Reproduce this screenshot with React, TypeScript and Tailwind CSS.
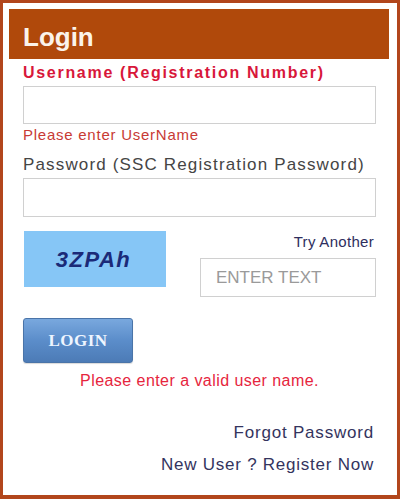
export default function App() {
  return (
    <div
      className="w-[400px] h-[499px] border-[3px] border-b-4 border-[#b2461c] bg-white pt-[6px] pl-[6px] pr-[8px] box-border"
      style={{ fontFamily: '"Liberation Sans", Arial, sans-serif' }}
    >
      <div className="w-[380px] h-[50px] bg-[#b0490b] pl-[14px] pt-[13px]">
        <div className="text-[26px] leading-[30px] font-bold text-[#fbf3ea]">Login</div>
      </div>
      <div className="pl-[14px] pr-[13px] flex flex-col">
        <div className="mt-[4px] text-[16px] leading-[20px] font-bold text-[#d8173a] tracking-[1.7px] whitespace-nowrap">
          Username (Registration Number)
        </div>
        <div className="mt-[3px] h-[38px] border border-[#d0d0d0] bg-white"></div>
        <div className="mt-[2px] text-[15px] leading-[18px] text-[#c83a35] tracking-[0.75px] whitespace-nowrap">
          Please enter UserName
        </div>
        <div className="mt-[11px] text-[17px] leading-[20px] text-[#454545] tracking-[1.15px] whitespace-nowrap">
          Password (SSC Registration Password)
        </div>
        <div className="mt-[3px] h-[39px] border border-[#d0d0d0] bg-white"></div>
        <div className="mt-[14px] flex justify-between">
          <div className="ml-[1px] w-[142px] h-[56px] bg-[#86c6f6] flex items-center justify-center">
            <span className="text-[22px] font-bold italic text-[#1b2a78] tracking-[1.5px] pr-[3px]">3ZPAh</span>
          </div>
          <div className="flex flex-col items-end">
            <div className="mt-[2px] pr-[2px] text-[15px] leading-[18px] text-[#2e2e5e] tracking-[0.3px]">
              Try Another
            </div>
            <div className="mt-[7px] w-[176px] h-[39px] border border-[#d0d0d0] bg-white flex items-center pl-[15px]">
              <span className="text-[17px] text-[#9a9a9a]">ENTER TEXT</span>
            </div>
          </div>
        </div>
        <div className="mt-[21px] w-[110px] h-[45px] rounded-[3px] border border-[#4a74a8] bg-gradient-to-b from-[#79a8de] via-[#5b8dca] to-[#4c7bb6] flex items-center justify-center shadow-[0_1px_1px_rgba(0,0,0,0.15)]">
          <span
            className="text-[17px] font-bold text-[#eef5ff] tracking-[0.5px]"
            style={{ fontFamily: '"Liberation Serif", "Times New Roman", serif' }}
          >
            LOGIN
          </span>
        </div>
        <div className="mt-[8px] text-center text-[16px] leading-[20px] text-[#e6253d] tracking-[0.45px] whitespace-nowrap">
          Please enter a valid user name.
        </div>
        <div className="mt-[32px] self-end pr-[2px] text-[17px] leading-[20px] text-[#34345e] tracking-[0.8px] whitespace-nowrap">
          Forgot Password
        </div>
        <div className="mt-[12px] self-end pr-[2px] text-[17px] leading-[20px] text-[#34345e] tracking-[0.76px] whitespace-nowrap">
          New User ? Register Now
        </div>
      </div>
    </div>
  );
}
